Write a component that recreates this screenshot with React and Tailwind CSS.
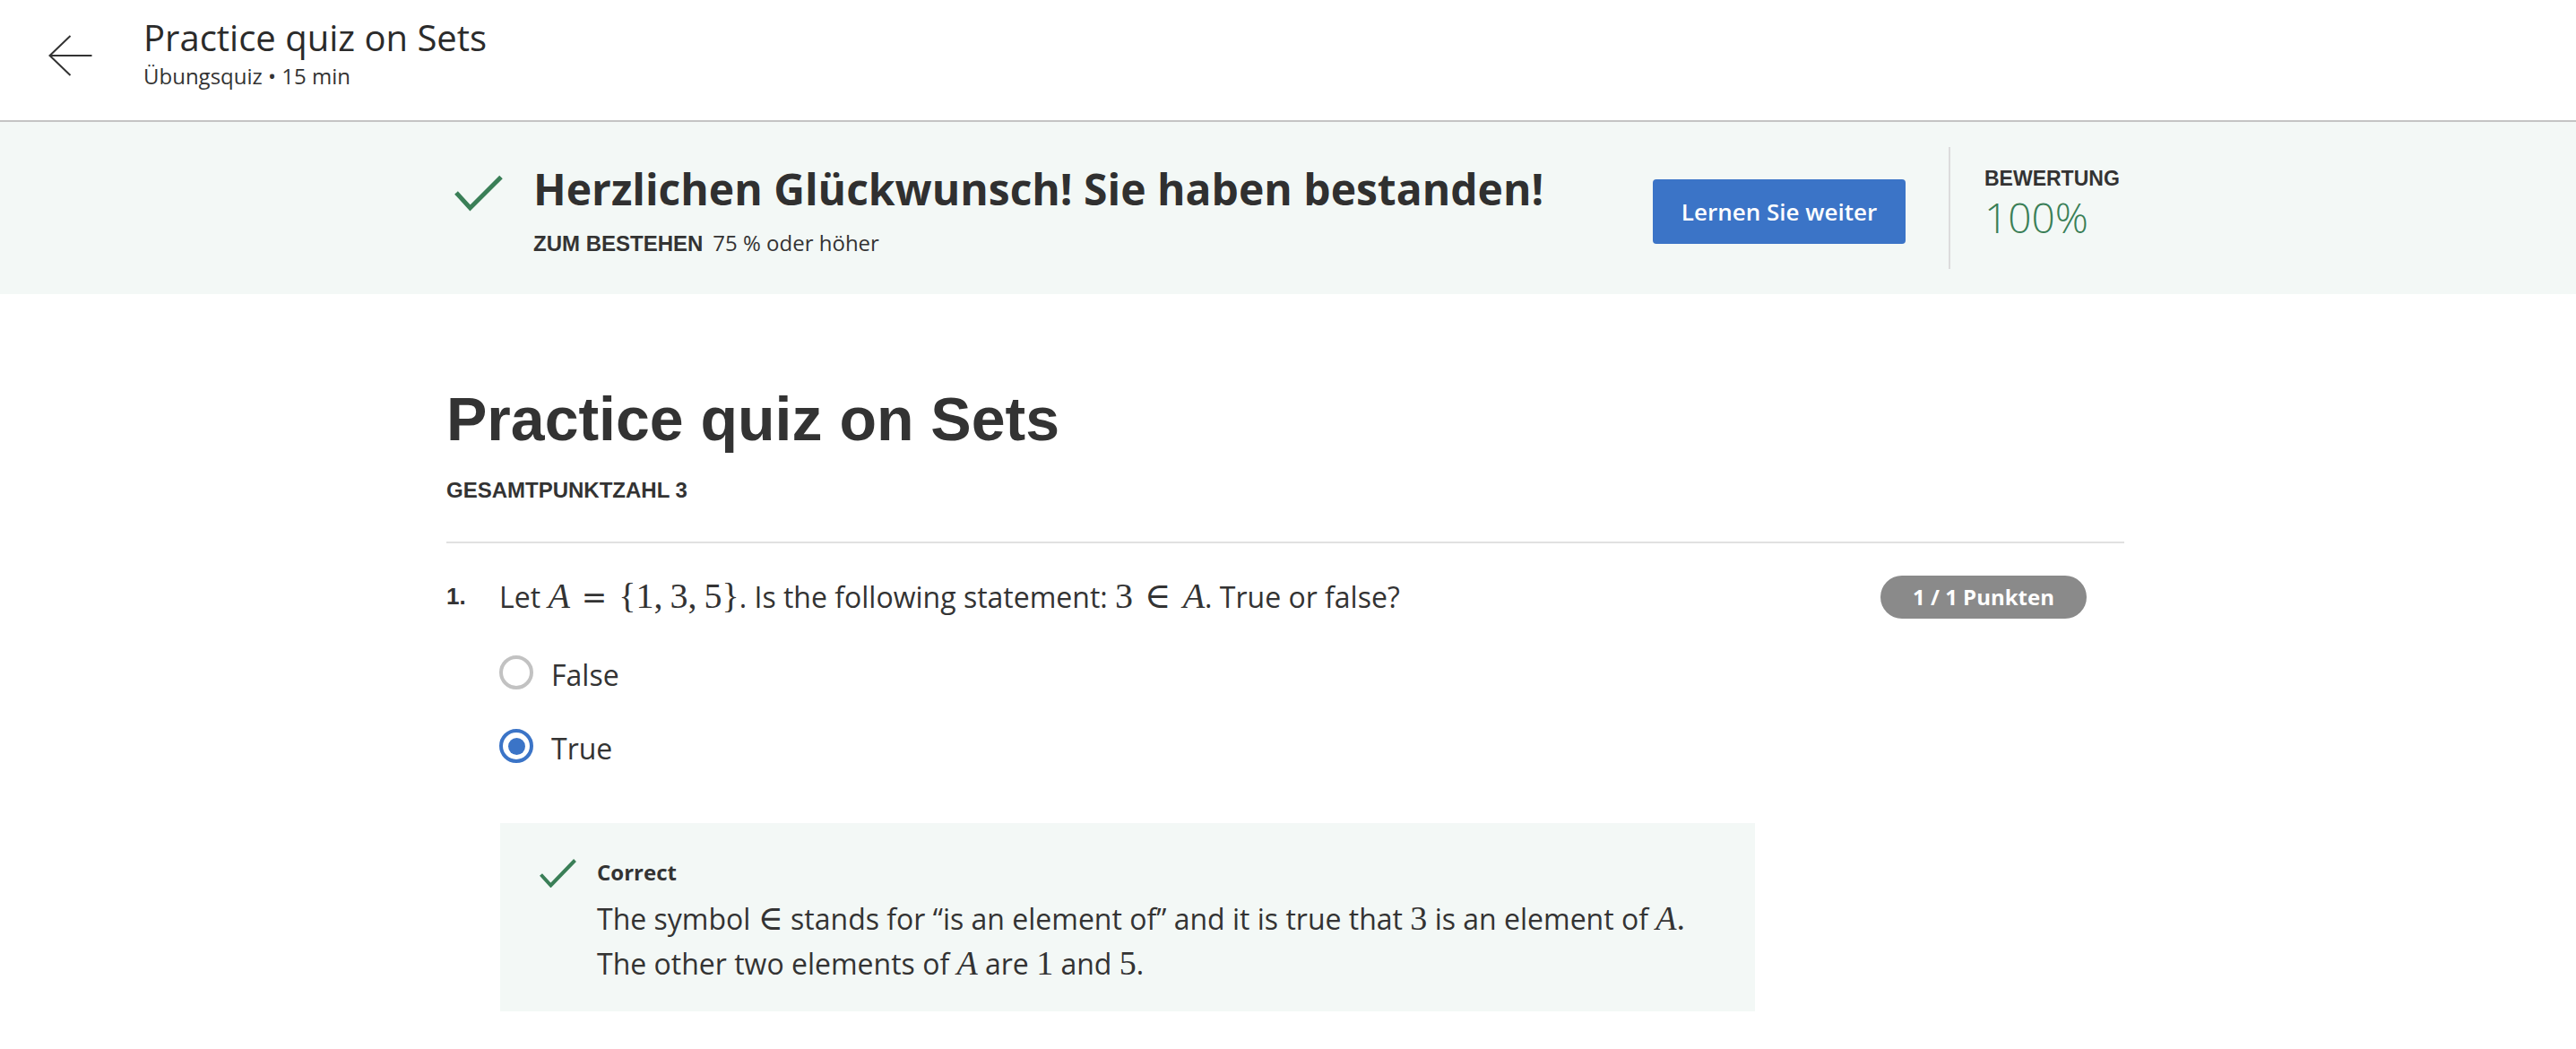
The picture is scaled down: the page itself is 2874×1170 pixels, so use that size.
import React from 'react';

const M = ({ children, className = 'text-[38px]' }) => (
    <span className={`font-['Liberation_Serif','DejaVu_Serif',serif] leading-none ${className}`}>{children}</span>
);

// relation symbols get extra space on both sides, as KaTeX does
const Rel = ({ children, className }) => (
    <span className={`leading-none mx-[13px] ${className}`}>{children}</span>
);

const Check = ({ className, width, height, points, stroke }) => (
    <svg className={className} width={width} height={height} viewBox={`0 0 ${width} ${height}`} fill="none">
        <polyline points={points} stroke="#3a7f57" strokeWidth={stroke} strokeLinejoin="miter" />
    </svg>
);

const Radio = ({ checked, label }) => (
    <div className="flex items-center h-[40px]">
        {checked ? (
            <span className="w-[38px] h-[38px] rounded-full border-4 border-[#3b74c7] flex items-center justify-center flex-none">
                <span className="w-[19px] h-[19px] rounded-full bg-[#3b74c7]" />
            </span>
        ) : (
            <span className="w-[38px] h-[38px] rounded-full border-4 border-[#c2c2c2] flex-none" />
        )}
        <span className="ml-[20px] pt-[5px] text-[32px] leading-[40px] text-[#333]">{label}</span>
    </div>
);

const App = () => {
    return (
        <div className="min-h-screen bg-white font-['Open_Sans',sans-serif] text-[#333]">
            {/* top bar */}
            <header className="h-[136px] border-b-2 border-[#c4c4c4] flex items-start">
                <svg className="ml-[54px] mt-[39px] flex-none" width="49" height="46" viewBox="0 0 49 46" fill="none">
                    <path d="M24.5 1 L1.5 23 L24.5 45 M1.5 23 H48.5" stroke="#333" strokeWidth="2" />
                </svg>
                <div className="ml-[57px] pt-[17px]">
                    <div className="text-[40px] leading-[50px] text-[#2b2b2b]">Practice quiz on Sets</div>
                    <div className="mt-[1px] text-[24px] leading-[34px] text-[#333]">Übungsquiz • 15 min</div>
                </div>
            </header>

            {/* passed banner */}
            <section className="h-[192px] bg-[#f3f8f6]">
                <div className="w-[1878px] mx-auto flex items-start h-full">
                    <div className="flex-1 flex items-start">
                        <Check className="ml-[9px] mt-[59px] flex-none" width={55} height={42} points="2,20 17.5,37 52,2.5" stroke={5} />
                        <div className="ml-[33px] mt-[45px]">
                            <h2 className="text-[48px] leading-[59px] font-bold text-[#303030]">Herzlichen Glückwunsch! Sie haben bestanden!</h2>
                            <div className="mt-[15px] text-[24px] leading-[32px]">
                                <span className="font-['Liberation_Sans',Arial,sans-serif] font-bold text-[24px]">ZUM BESTEHEN</span>
                                <span className="ml-[11px]">75 % oder höher</span>
                            </div>
                        </div>
                    </div>
                    <button className="mt-[64px] w-[282px] h-[72px] flex-none rounded-[4px] bg-[#3b74c7] text-white text-[26px] font-semibold flex items-center justify-center">
                        Lernen Sie weiter
                    </button>
                    <div className="ml-[48px] mt-[28px] w-[2px] h-[136px] bg-[#dcdcdc] flex-none" />
                    <div className="ml-[38px] mt-[52px] w-[162px] flex-none">
                        <div className="font-['Liberation_Sans',Arial,sans-serif] font-bold text-[23px] leading-[23px] text-[#333]">BEWERTUNG</div>
                        <div className="mt-[8px] text-[46px] leading-[46px] font-light text-[#3a7f57]">100%</div>
                    </div>
                </div>
            </section>

            {/* quiz body */}
            <main className="w-[1878px] mx-auto">
                <h1 className="mt-[105px] font-['Liberation_Sans',Arial,sans-serif] font-bold text-[68px] leading-[68px] text-[#333]">Practice quiz on Sets</h1>
                <div className="mt-[34px] font-['Liberation_Sans',Arial,sans-serif] font-bold text-[24px] leading-[23px] text-[#333]">GESAMTPUNKTZAHL 3</div>
                <div className="mt-[46px] mr-[6px] h-[2px] bg-[#e1e1e1]" />

                <div className="mt-[36px] flex items-start">
                    <div className="w-[59px] flex-none pt-[10px] font-['Liberation_Sans',Arial,sans-serif] font-bold text-[26px] leading-[26px] text-[#333]">1.</div>
                    <div className="flex-1 pt-[3px] text-[32px] leading-[40px] text-[#333]">
                        Let <M className="text-[40px]"><i>A</i><Rel className="font-['DejaVu_Serif',serif] text-[34px]">=</Rel>{'{'}1,<span className="ml-[8px]">3,</span><span className="ml-[8px]">5</span>{'}'}</M>. Is the following statement: <M className="text-[40px]">3<Rel>∈</Rel><i>A</i></M>. True or false?
                    </div>
                    <div className="mr-[48px] w-[230px] h-[48px] flex-none rounded-full bg-[#8a8a8a] text-white text-[24px] font-bold leading-none flex items-center justify-center">
                        1 / 1 Punkten
                    </div>
                </div>

                <div className="mt-[40px] pl-[59px] flex flex-col gap-[42px]">
                    <Radio label="False" />
                    <Radio checked label="True" />
                </div>

                <div className="mt-[66px] ml-[60px] w-[1400px] bg-[#f3f8f6] flex items-start">
                    <Check className="ml-[44px] mt-[40px] flex-none" width={41} height={32} points="1.5,17.5 12.5,29.5 39.5,1.5" stroke={4} />
                    <div className="ml-[23px] pt-[43px] pb-[28px]">
                        <div className="text-[24px] leading-[24px] font-bold text-[#333]">Correct</div>
                        <p className="mt-[15px] text-[32px] leading-[50px] text-[#333]">
                            The symbol <M>∈</M> stands for “is an element of” and it is true that <M>3</M> is an element of <M><i>A</i>.</M>
                            <br />
                            The other two elements of <M><i>A</i></M> are <M>1</M> and <M>5</M>.
                        </p>
                    </div>
                </div>
            </main>
        </div>
    );
};

export default App;
